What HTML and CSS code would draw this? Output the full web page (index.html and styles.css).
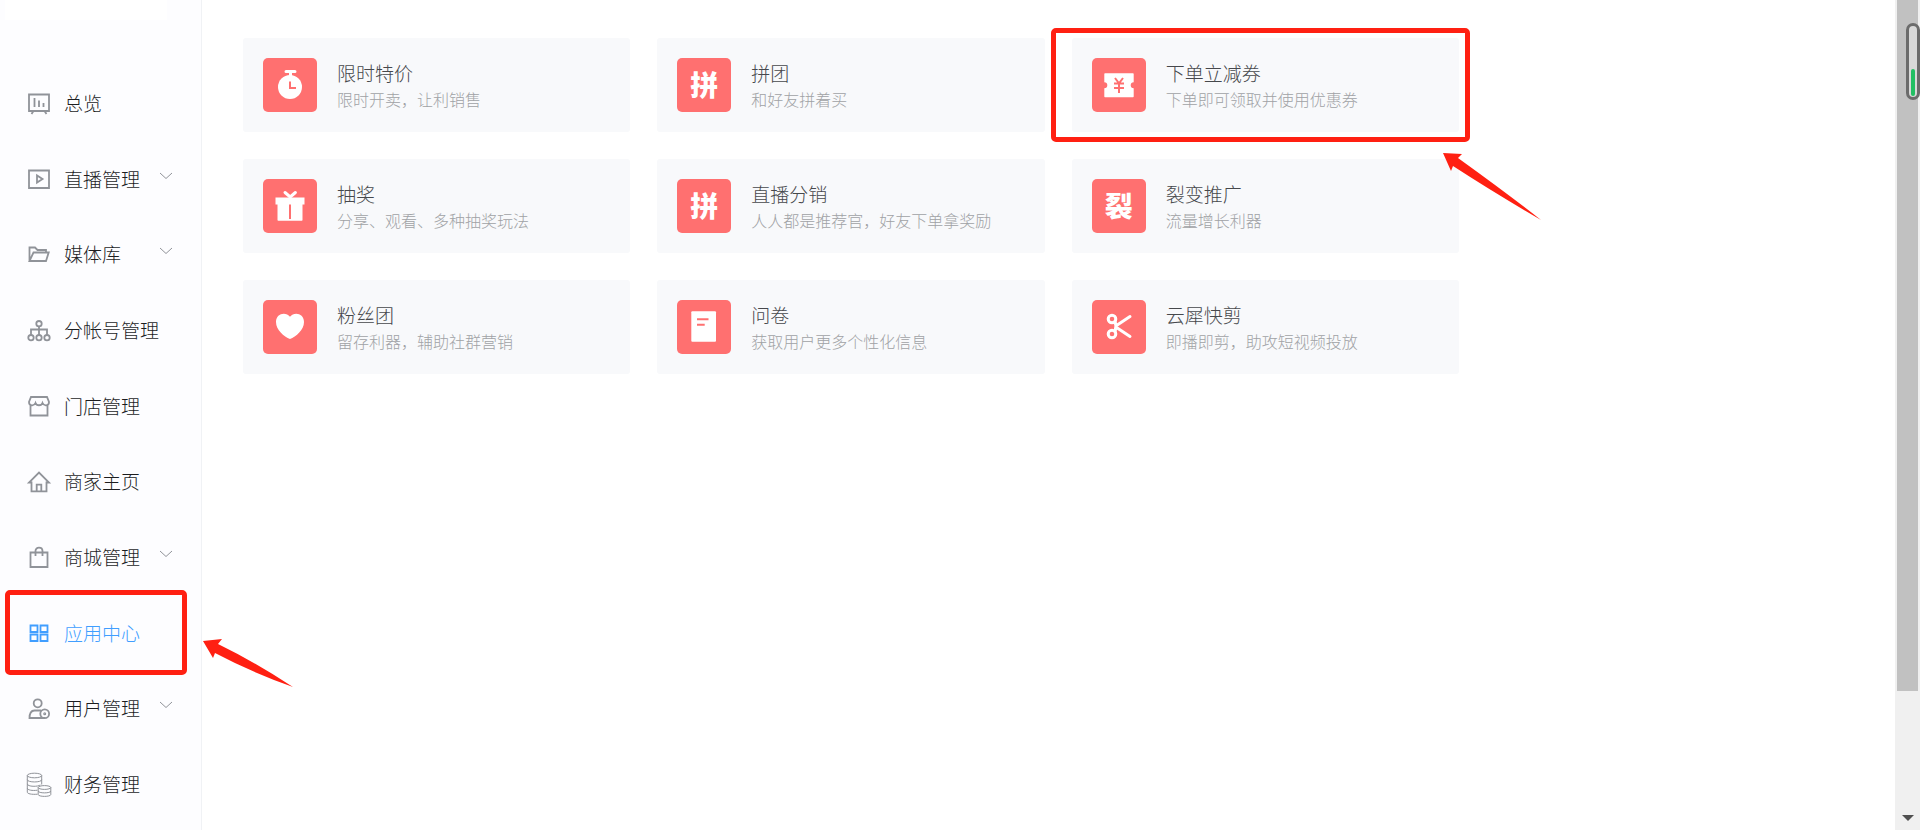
FILE: index.html
```
<!DOCTYPE html>
<html lang="zh-CN">
  <head>
    <meta charset="UTF-8" />
    <meta name="viewport" content="width=device-width, initial-scale=1.0" />
    <title>应用中心</title>
    <link rel="stylesheet" href="styles.css">
  </head>
  <body>
    <aside class="sidebar">
      <div class="logo"></div>
      <nav class="menu">
        <a class="menu-item" href="#">
          <svg class="menu-icon" viewBox="0 0 24 24"><path d="M2 2.500h20v16.500H2zM7.500 6v9M12 8.500V15M16.500 11v4M6.500 19l-2 3M17.500 19l2 3" /></svg>
          <span>总览</span>
        </a>
        <a class="menu-item" href="#">
          <svg class="menu-icon" viewBox="0 0 24 24"><path d="M2 2.500h20v17.500H2zM10 7.500v7l5.500-3.500z" /></svg>
          <span>直播管理</span>
          <svg class="arrow" viewBox="0 0 12 8"><path d="M0 1l6 5.500L12 1" /></svg>
        </a>
        <a class="menu-item" href="#">
          <svg class="menu-icon" viewBox="0 0 24 24"><path d="M2.500 18V4.500H8L10.500 7H19v2.500M2.500 18l4-8.500h15.200L19 18z" /></svg>
          <span>媒体库</span>
          <svg class="arrow" viewBox="0 0 12 8"><path d="M0 1l6 5.500L12 1" /></svg>
        </a>
        <a class="menu-item" href="#">
          <svg class="menu-icon" viewBox="0 0 24 24"><circle cx="12" cy="4.700" r="2.700" /><circle cx="4" cy="18.700" r="2.700" /><circle cx="12" cy="18.700" r="2.700" /><circle cx="20" cy="18.700" r="2.700" /><path d="M12 7.400V16M4 16v-5.500h16V16" /></svg>
          <span>分帐号管理</span>
        </a>
        <a class="menu-item" href="#">
          <svg class="menu-icon" viewBox="0 0 24 24"><path d="M4 2h16l2 5c0 4-5 4.500-6.500 1-1 3-6 3-7 0C7 11.500 2 11 2 7zM3.500 10v10.500h17V10" /></svg>
          <span>门店管理</span>
        </a>
        <a class="menu-item" href="#">
          <svg class="menu-icon" viewBox="0 0 24 24"><path d="M4.500 12.500H2L12 2.500l10 10h-2.500v8.800h-15zM9.700 21v-6.300h4.600V21" /></svg>
          <span>商家主页</span>
        </a>
        <a class="menu-item" href="#">
          <svg class="menu-icon" viewBox="0 0 24 24"><path d="M3.500 6.500h17V21h-17zM8.500 10V5c0-4.500 7-4.500 7 0v5" /></svg>
          <span>商城管理</span>
          <svg class="arrow" viewBox="0 0 12 8"><path d="M0 1l6 5.500L12 1" /></svg>
        </a>
        <a class="menu-item active" href="#">
          <svg class="menu-icon" viewBox="0 0 24 24"><path d="M3.500 3.500h7v6.500h-7zM13.500 3.500h7v6.500h-7zM3.500 12.500h7V19h-7zM13.500 12.500h7V19h-7z" /></svg>
          <span>应用中心</span>
          <i class="mark mark-menu"></i>
          <svg class="pointer pointer-menu" viewBox="0 0 90 48"><path d="M0 1l19-2-4 5Q50 21 90 47 50 33 12 13l-2 5z" /></svg>
        </a>
        <a class="menu-item" href="#">
          <svg class="menu-icon" viewBox="0 0 24 24"><circle cx="10.700" cy="6.300" r="4" /><path d="M14 13.500H7.500C4 13.500 2.500 16 2.500 21H18" /><circle cx="17.700" cy="16.700" r="4.400" /><circle cx="17.700" cy="16.700" r=".6" /></svg>
          <span>用户管理</span>
          <svg class="arrow" viewBox="0 0 12 8"><path d="M0 1l6 5.500L12 1" /></svg>
        </a>
        <a class="menu-item" href="#">
          <svg class="menu-icon thin" viewBox="0 0 24 24"><ellipse cx="7.500" cy="2.500" rx="7.200" ry="2.300" /><path d="M.3 2.500v16.700c0 1.500 4 2.500 10.200 2M14.700 2.500v9M.3 6.700c0 3 14.400 3 14.400 0M.3 10.900c0 3 11 3 13 1M.3 15.100c0 2 5 2.800 10.200 2.100" /><ellipse cx="17.500" cy="14.500" rx="6.300" ry="1.900" /><path d="M11.200 14.500v7c0 2.500 12.600 2.500 12.600 0v-7M11.200 18c0 2.500 12.600 2.500 12.600 0" /></svg>
          <span>财务管理</span>
        </a>
      </nav>
    </aside>

    <main class="content">
      <div class="app-list">
        <a class="app" href="#">
          <svg class="app-icon" viewBox="0 0 54 54"><circle cx="27" cy="29" r="12" /><path d="M23 13.500h9M27.500 14v4" class="line" /><path d="M27 23.500V30h6" class="cut" /></svg>
          <div class="app-text">
            <h3>限时特价</h3>
            <p>限时开卖，让利销售</p>
          </div>
        </a>
        <a class="app" href="#">
          <span class="app-icon">拼</span>
          <div class="app-text">
            <h3>拼团</h3>
            <p>和好友拼着买</p>
          </div>
        </a>
        <a class="app" href="#">
          <svg class="app-icon" viewBox="0 0 54 54"><path d="M13 15.300h28q.7 0 .7.700v8.300a3 3 0 0 0 0 6v8.300q0 .7-.7.700H13q-.7 0-.7-.7v-8.300a3 3 0 0 0 0-6V16q0-.7.700-.7z" /><path d="M23 20l4 5.300 4-5.300M27 25v10M22 25.500h10M22 30h10" class="cut" /></svg>
          <div class="app-text">
            <h3>下单立减券</h3>
            <p>下单即可领取并使用优惠券</p>
          </div>
          <i class="mark mark-app"></i>
          <svg class="pointer pointer-app" viewBox="0 0 98 68"><path d="M0 0l19 1-4 4Q65 41 98 67 50 39 10 13l-2 5z" /></svg>
        </a>
        <a class="app" href="#">
          <svg class="app-icon" viewBox="0 0 54 54"><path d="M12.500 18.500h29v7h-2V41q0 .7-.7.700H15.200q-.7 0-.7-.7V25.500h-2z" /><path d="M22 13.500l5.200 4.500 5.200-4.500" class="line" /><path d="M27 25.500V40" class="cut" /></svg>
          <div class="app-text">
            <h3>抽奖</h3>
            <p>分享、观看、多种抽奖玩法</p>
          </div>
        </a>
        <a class="app" href="#">
          <span class="app-icon">拼</span>
          <div class="app-text">
            <h3>直播分销</h3>
            <p>人人都是推荐官，好友下单拿奖励</p>
          </div>
        </a>
        <a class="app" href="#">
          <span class="app-icon">裂</span>
          <div class="app-text">
            <h3>裂变推广</h3>
            <p>流量增长利器</p>
          </div>
        </a>
        <a class="app" href="#">
          <svg class="app-icon" viewBox="0 0 54 54"><path d="M27 16.700C23 11.500 13 13 13 22c0 8 8 14.500 14 17 6-2.500 14-9 14-17 0-9-10-10.500-14-5.300z" /></svg>
          <div class="app-text">
            <h3>粉丝团</h3>
            <p>留存利器，辅助社群营销</p>
          </div>
        </a>
        <a class="app" href="#">
          <svg class="app-icon" viewBox="0 0 54 54"><rect x="14.300" y="11.300" width="24.700" height="30.400" rx="1" /><path d="M20 19.300h11.500M20 24.700h7.700" class="cut" /></svg>
          <div class="app-text">
            <h3>问卷</h3>
            <p>获取用户更多个性化信息</p>
          </div>
        </a>
        <a class="app" href="#">
          <svg class="app-icon" viewBox="0 0 54 54"><g class="line"><circle cx="20" cy="19" r="3.800" /><circle cx="20" cy="34" r="3.800" /><path d="M23 21.500q2 5 0 10M24.500 25.500l13.500-9M24.500 27.500l13.500 9" /></g></svg>
          <div class="app-text">
            <h3>云犀快剪</h3>
            <p>即播即剪，助攻短视频投放</p>
          </div>
        </a>
      </div>
    </main>

    <div class="scrollbar">
      <div class="thumb"></div>
      <svg class="scroll-down" viewBox="0 0 12 6"><path d="M0 0h12L6 6z" /></svg>
      <div class="gauge"><div class="gauge-level"></div></div>
    </div>
  </body>
</html>
```
FILE: styles.css
```
* {
  box-sizing: border-box;
}
body {
  display: flex;
  height: 100vh;
  margin: 0;
  overflow: hidden;
  background: #fff;
  color: #1c1d1f;
  font-family: "Noto Sans CJK SC", sans-serif;
  font-weight: 300;
}
a {
  color: inherit;
  text-decoration: none;
}
h3,
p {
  margin: 0;
  font-weight: 300;
}

/* 侧边栏 */
.sidebar {
  position: relative;
  z-index: 1;
  display: flex;
  flex-direction: column;
  flex: none;
  width: 202px;
  padding-bottom: 7px;
  background: #fdfdff;
  border-right: 1px solid #f0f2f5;
}
.logo {
  flex: none;
  height: 20px;
  margin: 0 34px 46px 5px;
  background: #fff;
}
.menu {
  display: flex;
  flex-direction: column;
  flex: 1;
}
.menu-item {
  position: relative;
  display: flex;
  flex: 1;
  align-items: center;
  padding: 0 29px 0 27px;
  font-size: 19px;
  line-height: 28px;
}
.menu-item span {
  padding-bottom: 2px;
}
.menu-icon {
  flex: none;
  width: 24px;
  height: 24px;
  margin-right: 13px;
  overflow: visible;
  fill: none;
  stroke: #909399;
  stroke-width: 1.8;
}
.menu-icon.thin {
  stroke-width: 1;
}
.menu-item.active {
  color: #409eff;
}
.active .menu-icon {
  stroke: #409eff;
}
.arrow {
  width: 12px;
  height: 8px;
  margin: 0 0 8px auto;
  fill: none;
  stroke: #909399;
}

/* 应用列表 */
.content {
  flex: 1;
  padding: 38px 41px;
}
.app-list {
  display: grid;
  grid-template-columns: repeat(3, 1fr);
  gap: 27px;
  max-width: 1216px;
}
.app {
  position: relative;
  display: flex;
  align-items: center;
  gap: 20px;
  min-height: 94px;
  padding: 20px;
  background: #f8f9fb;
  border-radius: 3px;
}
.app-icon {
  flex: none;
  width: 54px;
  height: 54px;
  background: #ff7070;
  border-radius: 5px;
  color: #fff;
  fill: #fff;
  font-size: 28px;
  font-weight: 900;
  line-height: 52px;
  text-align: center;
}
.line {
  fill: none;
  stroke: #fff;
  stroke-width: 3;
  stroke-linecap: round;
}
.cut {
  fill: none;
  stroke: #ff7070;
  stroke-width: 2;
}
.app-text h3 {
  color: #46484c;
  font-size: 19px;
  line-height: 28px;
}
.app-text p {
  color: #a0a2a5;
  font-size: 16px;
  line-height: 24px;
}

/* 红色标注 */
.mark {
  position: absolute;
  border: 5px solid #ff2012;
  border-radius: 5px;
}
.mark-menu {
  inset: -6px 14px -3px 5px;
}
.mark-app {
  inset: -10px -11px -10px -21px;
}
.pointer {
  position: absolute;
  overflow: visible;
  fill: #ff2012;
}
.pointer-menu {
  top: 44px;
  left: 203px;
  width: 90px;
}
.pointer-app {
  top: 115px;
  left: 371px;
  z-index: 1;
  width: 98px;
}

/* 滚动条 */
.scrollbar {
  position: relative;
  display: flex;
  flex-direction: column;
  justify-content: space-between;
  align-items: center;
  flex: none;
  width: 25px;
  padding-bottom: 9px;
  background: #f0f0f0;
}
.thumb {
  width: 21px;
  height: 83.25vh;
  background: #c1c1c1;
}
.scroll-down {
  width: 12px;
  fill: #505050;
}
.gauge {
  position: absolute;
  top: 23px;
  right: 0;
  display: flex;
  align-items: flex-end;
  width: 14px;
  height: 77px;
  padding: 1px 2px;
  background: #d8d8d8;
  border: 3px solid #6b6b6b;
  border-radius: 7px;
}
.gauge-level {
  width: 4px;
  height: 27px;
  background: #22bf63;
  border-radius: 2px;
}
```
